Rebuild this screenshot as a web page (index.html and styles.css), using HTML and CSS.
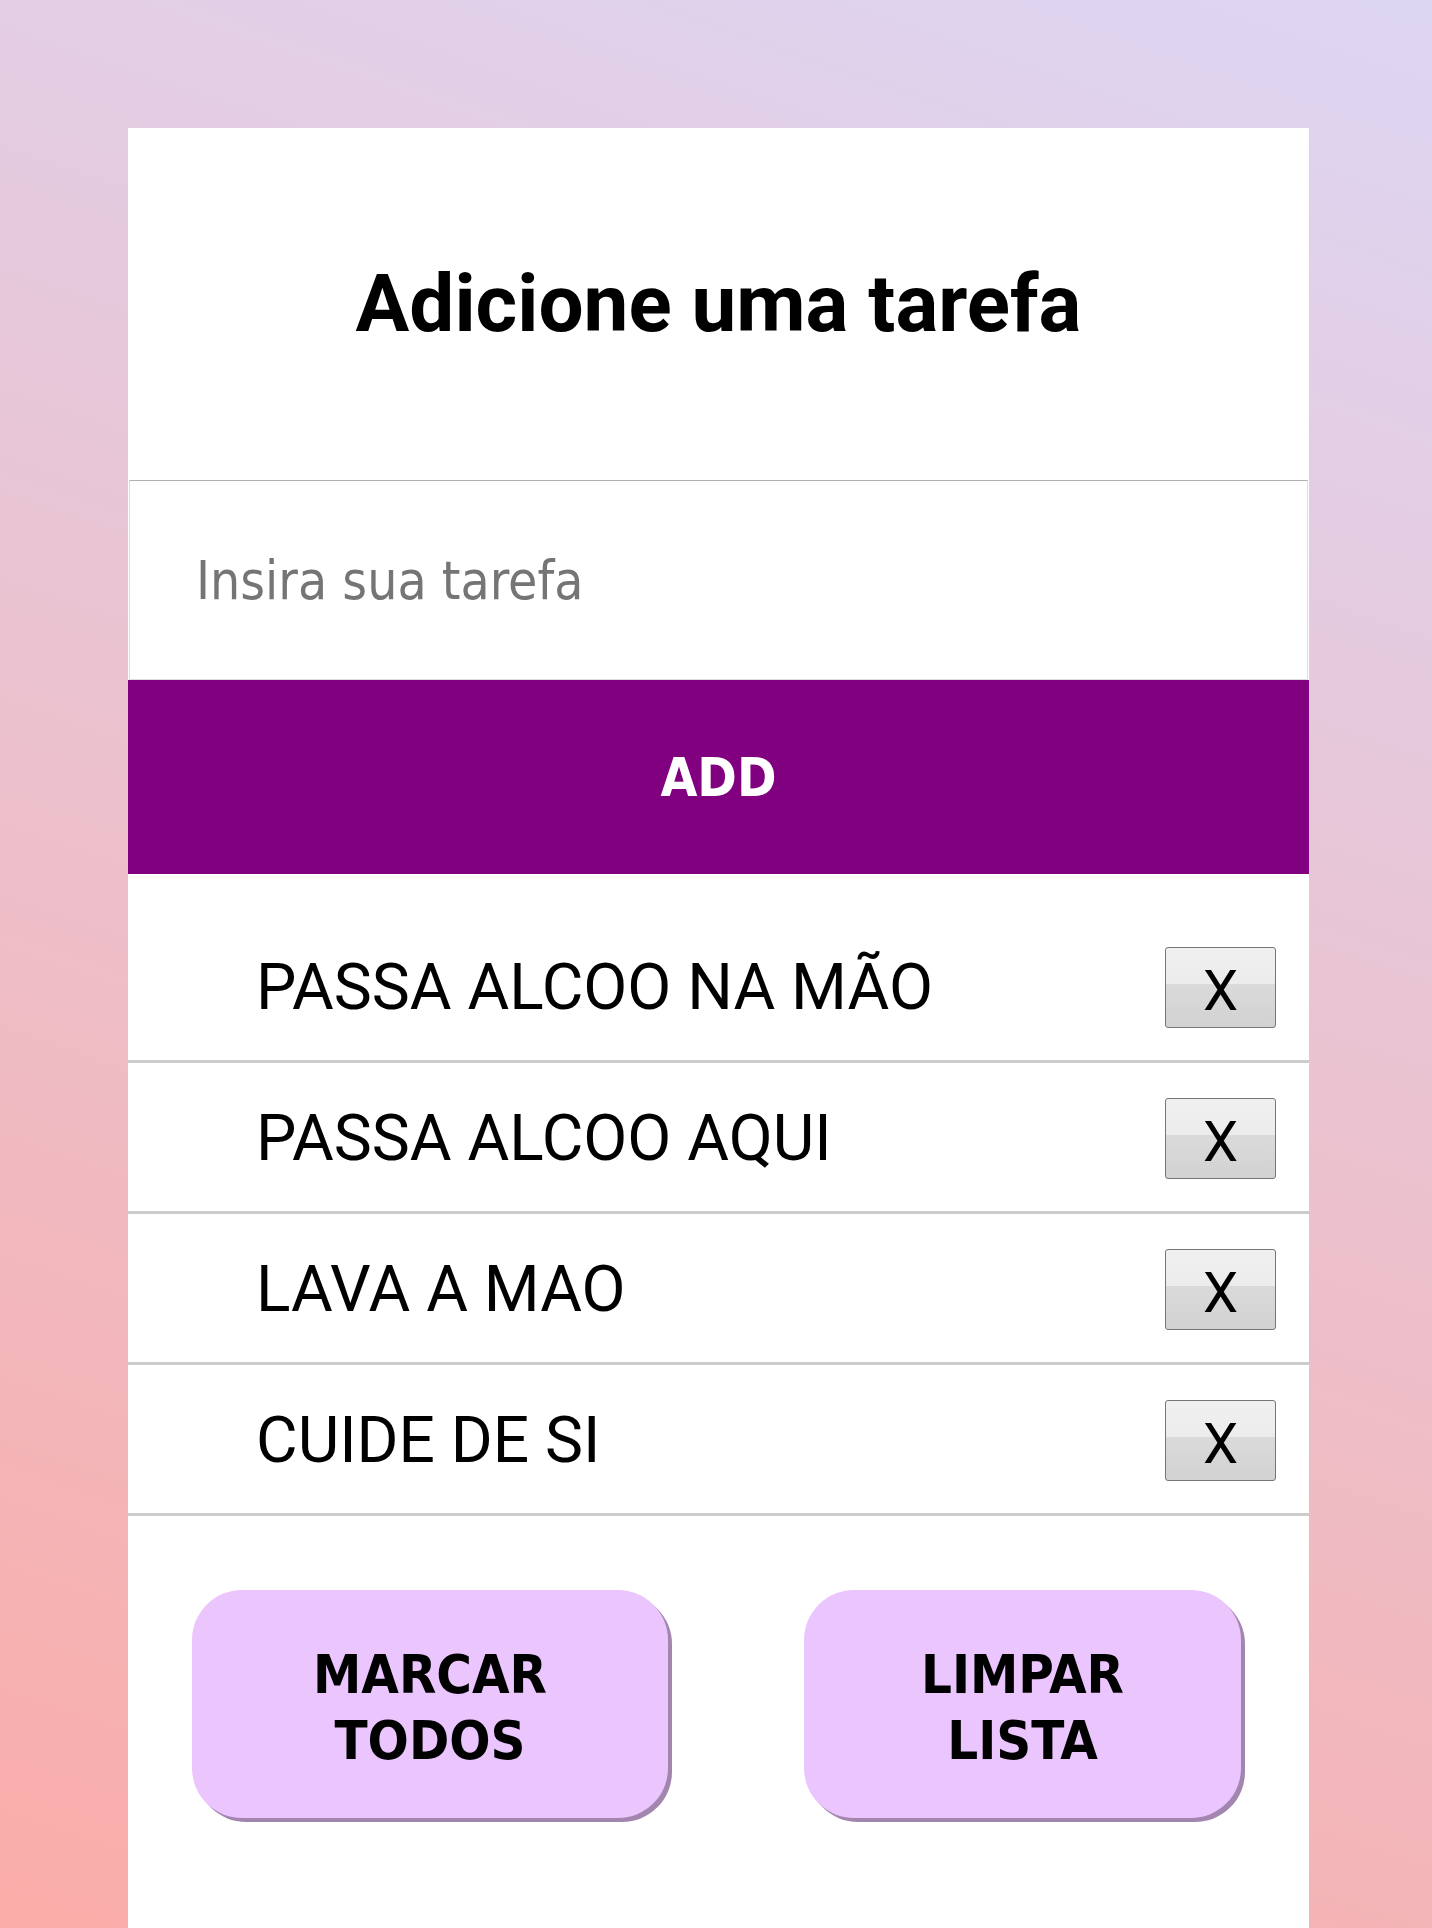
FILE: index.html
```html
<!DOCTYPE html>
<html lang="pt-BR">
<head>
<meta charset="utf-8">
<title>Tarefas</title>
<link rel="stylesheet" href="styles.css">
</head>
<body>
<main class="card">
  <header class="card-header">
    <h1 class="title">Adicione uma tarefa</h1>
  </header>
  <input class="task-input" type="text" placeholder="Insira sua tarefa">
  <button class="add-btn" type="button">ADD</button>
  <ul class="task-list">
    <li class="task"><span class="task-text">PASSA ALCOO NA MÃO</span><button class="remove-btn" type="button">X</button></li>
    <li class="task"><span class="task-text">PASSA ALCOO AQUI</span><button class="remove-btn" type="button">X</button></li>
    <li class="task"><span class="task-text">LAVA A MAO</span><button class="remove-btn" type="button">X</button></li>
    <li class="task"><span class="task-text">CUIDE DE SI</span><button class="remove-btn" type="button">X</button></li>
  </ul>
  <div class="actions">
    <button class="action-btn action-mark" type="button">MARCAR<br>TODOS</button>
    <button class="action-btn action-clear" type="button">LIMPAR<br>LISTA</button>
  </div>
</main>
</body>
</html>
```

FILE: styles.css
```css
html, body {
  margin: 0;
  padding: 0;
}

body {
  min-height: 100vh;
  background-image: linear-gradient(19deg, #faaca8 0%, #ddd6f3 100%);
  background-attachment: fixed;
  font-family: Roboto, "Liberation Sans", sans-serif;
  overflow: hidden;
}

.card {
  box-sizing: border-box;
  width: 1181px;
  height: 1800px;
  margin: 128px 0 0 128px;
  background: #ffffff;
  display: flex;
  flex-direction: column;
}

.card-header {
  height: 352px;
  display: flex;
  align-items: center;
  justify-content: center;
}

.title {
  margin: 0;
  font-family: Roboto, "Liberation Sans", sans-serif;
  font-weight: 700;
  font-size: 80px;
  color: #000;
}

.task-input {
  display: block;
  box-sizing: border-box;
  width: 1179px;
  height: 200px;
  margin: 0 auto;
  padding: 0 0 0 66px;
  border: 1px solid #dddddd;
  border-top-color: #b0b0b0;
  outline: none;
  background: #fff;
  font-family: "DejaVu Sans Condensed", "DejaVu Sans", sans-serif;
  font-stretch: condensed;
  font-size: 53px;
  color: #000;
}

.task-input::placeholder {
  color: #757575;
}

.add-btn {
  display: block;
  width: 100%;
  height: 194px;
  margin: 0;
  border: none;
  background: #800080;
  color: #fff;
  font-family: "DejaVu Sans Condensed", "DejaVu Sans", sans-serif;
  font-stretch: condensed;
  font-weight: 700;
  font-size: 53px;
  cursor: pointer;
}

.task-list {
  list-style: none;
  margin: 0;
  padding: 38px 0 0 0;
}

.task {
  box-sizing: border-box;
  height: 151px;
  border-bottom: 3px solid #cccccc;
  display: flex;
  align-items: center;
  justify-content: space-between;
  padding: 3px 33px 0 128px;
}

.task-text {
  font-family: Roboto, "Liberation Sans", sans-serif;
  font-size: 64px;
  color: #000;
}

.remove-btn {
  box-sizing: border-box;
  width: 111px;
  height: 81px;
  padding: 6px 0 0 0;
  border: 1px solid #767676;
  border-radius: 3px;
  background: linear-gradient(to bottom, #f0f0f0 0%, #ececec 45%, #dadada 46%, #d2d2d2 100%);
  font-family: Roboto, "Liberation Sans", sans-serif;
  font-size: 56px;
  line-height: 1;
  color: #000;
  cursor: pointer;
}

.actions {
  display: flex;
  justify-content: space-between;
  padding: 74px 68px 0 64px;
}

.action-btn {
  box-sizing: border-box;
  height: 228px;
  padding: 8px 0 0 0;
  border: none;
  border-radius: 50px;
  background: #ebc5fd;
  box-shadow: 4px 4px 0 #a386b0;
  font-family: "DejaVu Sans Condensed", "DejaVu Sans", sans-serif;
  font-stretch: condensed;
  font-weight: 700;
  font-size: 54px;
  line-height: 66px;
  color: #000;
  cursor: pointer;
}

.action-mark {
  width: 476px;
}

.action-clear {
  width: 437px;
}
```
